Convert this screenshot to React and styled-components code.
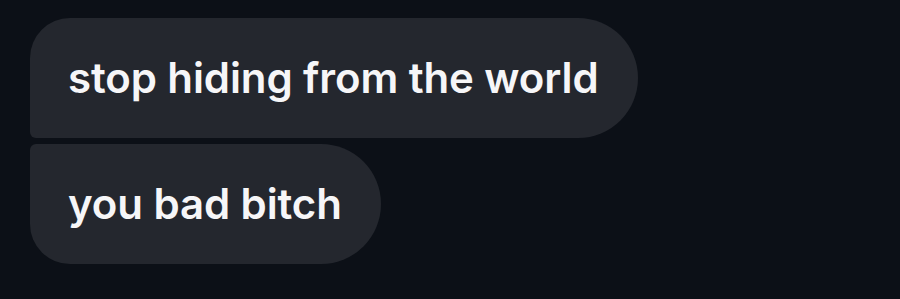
import React from "react";
import styled, { createGlobalStyle } from "styled-components";

const GlobalStyle = createGlobalStyle`
  html, body {
    margin: 0;
    padding: 0;
    background: #0c1017;
  }
`;

const Thread = styled.div`
  display: flex;
  flex-direction: column;
  align-items: flex-start;
  gap: 6px;
  padding: 18px 0 0 30px;
  width: 900px;
  height: 299px;
  box-sizing: border-box;
  background: #0c1017;
  font-family: Inter, "Noto Sans", sans-serif;
`;

const Bubble = styled.div`
  box-sizing: border-box;
  height: 120px;
  display: flex;
  align-items: center;
  padding: 0 39px 2px 38px;
  background: #24272e;
  color: #f6f6f8;
  font-size: 42px;
  font-weight: 600;
  letter-spacing: -0.1px;
  border-radius: ${(p) =>
    p.$first ? "40px 60px 60px 6px" : "6px 60px 60px 40px"};
`;

export default function App() {
  return (
    <>
      <GlobalStyle />
      <Thread>
        <Bubble $first>stop hiding from the world</Bubble>
        <Bubble>you bad bitch</Bubble>
      </Thread>
    </>
  );
}
